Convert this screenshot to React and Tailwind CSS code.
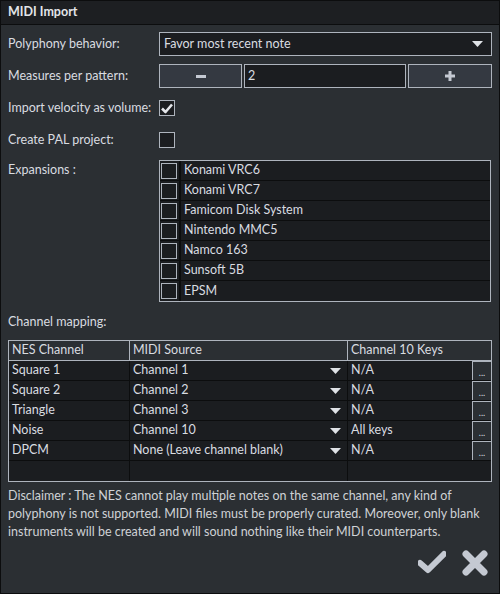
import React from 'react';

const font = { fontFamily: 'Lato, "Noto Sans", sans-serif' };

const Check = ({ checked }) => (
  <div className="w-[16px] h-[16px] border border-[#aeb4bd] bg-[#1b1d20] flex items-center justify-center">
    {checked && (
      <svg width="12" height="12" viewBox="0 0 12 12">
        <path d="M1 6.5 L4.5 10 L11 2.5" stroke="#e4e6ea" strokeWidth="2.6" fill="none" strokeLinejoin="round" />
      </svg>
    )}
  </div>
);

const Arrow = () => (
  <svg width="11" height="6" viewBox="0 0 11 6">
    <path d="M0 0 H11 L5.5 6 Z" fill="#dfe2e6" />
  </svg>
);

const Row = ({ label, first, children }) => (
  <div className={`flex items-center h-[24px] ${first ? 'mt-[7px]' : 'mt-[8px]'}`}>
    <div className="w-[151px] shrink-0">{label}</div>
    {children}
  </div>
);

const expansions = ['Konami VRC6', 'Konami VRC7', 'Famicom Disk System', 'Nintendo MMC5', 'Namco 163', 'Sunsoft 5B', 'EPSM'];

const channels = [
  ['Square 1', 'Channel 1', 'N/A'],
  ['Square 2', 'Channel 2', 'N/A'],
  ['Triangle', 'Channel 3', 'N/A'],
  ['Noise', 'Channel 10', 'All keys'],
  ['DPCM', 'None (Leave channel blank)', 'N/A'],
];

export default function App() {
  return (
    <div style={font} className="w-[500px] h-[594px] bg-[#2b2f33] border border-[#0c0d0e] flex flex-col text-[12.5px] text-[#d9dce0] overflow-hidden">
      <div className="h-[24px] shrink-0 bg-[#1d1f22] border-b border-[#0c0d0e] flex items-center px-[7px] font-bold text-[#e3e5e8]">
        MIDI Import
      </div>
      <div className="px-[7px] flex flex-col">
        <Row label="Polyphony behavior:" first>
          <div className="flex-1 h-[24px] border border-[#aeb4bd] bg-[#1b1d20] flex items-center justify-between pl-[4px] pr-[8px]">
            <span>Favor most recent note</span>
            <Arrow />
          </div>
        </Row>
        <Row label="Measures per pattern:">
          <div className="flex-1 flex gap-[2px] h-[24px]">
            <div className="w-[83px] border border-[#aeb4bd] bg-[#343941] flex items-center justify-center">
              <div className="w-[10px] h-[3px] bg-[#c4c9d2]" />
            </div>
            <div className="flex-1 border border-[#aeb4bd] bg-[#1b1d20] flex items-center pl-[3px]">2</div>
            <div className="w-[84px] border border-[#aeb4bd] bg-[#343941] flex items-center justify-center">
              <svg width="10" height="10" viewBox="0 0 10 10">
                <path d="M3.5 0 H6.5 V3.5 H10 V6.5 H6.5 V10 H3.5 V6.5 H0 V3.5 H3.5 Z" fill="#c4c9d2" />
              </svg>
            </div>
          </div>
        </Row>
        <Row label="Import velocity as volume:">
          <Check checked />
        </Row>
        <Row label="Create PAL project:">
          <Check />
        </Row>
        <div className="flex mt-[8px]">
          <div className="w-[151px] shrink-0 h-[20px] flex items-center">Expansions :</div>
          <div className="flex-1 border border-[#aeb4bd] bg-[#1b1d20] mr-[1px]">
            {expansions.map((e, i) => (
              <div key={e} className={`flex h-[20px] ${i < expansions.length - 1 ? 'border-b border-[#0c0d0e]' : ''}`}>
                <div className="w-[21px] flex items-center pl-[1px] border-r-2 border-[#0c0d0e]">
                  <Check />
                </div>
                <div className="flex items-center pl-[3px]">{e}</div>
              </div>
            ))}
          </div>
        </div>
        <div className="h-[24px] flex items-center mt-[8px]">Channel mapping:</div>
        <div className="mt-[6px] border border-[#aeb4bd] bg-[#1b1d20]">
          <div className="flex h-[20px] bg-[#2b2f33] border-b border-[#aeb4bd]">
            <div className="w-[121px] flex items-center pl-[3px] border-r border-[#aeb4bd]">NES Channel</div>
            <div className="w-[218px] flex items-center pl-[3px] border-r border-[#aeb4bd]">MIDI Source</div>
            <div className="flex-1 flex items-center pl-[3px]">Channel 10 Keys</div>
          </div>
          {channels.map(([a, b, c]) => (
            <div key={a} className="flex h-[20px] border-b border-[#0c0d0e]">
              <div className="w-[121px] flex items-center pl-[3px] border-r border-[#0c0d0e]">{a}</div>
              <div className="w-[218px] flex items-center justify-between pl-[3px] pr-[6px] border-r border-[#0c0d0e]">
                <span>{b}</span>
                <Arrow />
              </div>
              <div className="flex-1 flex items-center pl-[3px]">{c}</div>
              <div className="w-[19px] border-l border-t border-[#aeb4bd] bg-[#2b2f33] flex items-end justify-center pb-[3px] text-[9px] leading-none">...</div>
            </div>
          ))}
          <div className="flex h-[20px]">
            <div className="w-[121px] border-r border-[#0c0d0e]" />
            <div className="w-[218px] border-r border-[#0c0d0e]" />
            <div className="flex-1" />
          </div>
        </div>
        <div className="mt-[5px] leading-[18px] text-[#cfd2d6] whitespace-nowrap">
          Disclaimer : The NES cannot play multiple notes on the same channel, any kind of<br />
          polyphony is not supported. MIDI files must be properly curated. Moreover, only blank<br />
          instruments will be created and will sound nothing like their MIDI counterparts.
        </div>
        <div className="flex justify-end gap-[16px] mt-[9px] pr-[4px]">
          <svg width="28" height="24" viewBox="0 0 28 24">
            <path d="M2 13 L10 20 L26 4" stroke="#c4c9d2" strokeWidth="6" fill="none" strokeLinejoin="round" strokeLinecap="round" />
          </svg>
          <svg width="26" height="26" viewBox="0 0 26 26">
            <path d="M4 4 L22 22 M22 4 L4 22" stroke="#c4c9d2" strokeWidth="7" strokeLinecap="round" />
          </svg>
        </div>
      </div>
    </div>
  );
}
